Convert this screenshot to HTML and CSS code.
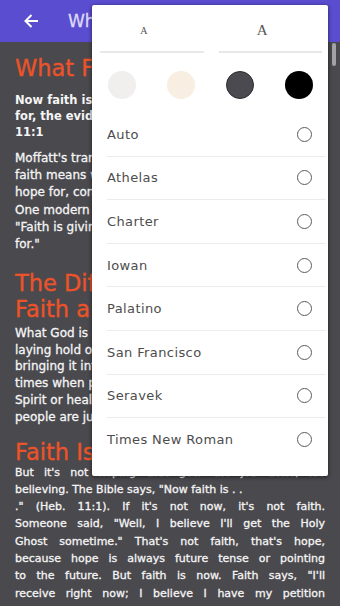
FILE: index.html
```html
<!DOCTYPE html>
<html lang="en">
<head>
<meta charset="utf-8">
<title>What Faith Is</title>
<link rel="stylesheet" href="styles.css">
</head>
<body>
<div class="screen">
  <header class="appbar">
    <svg class="back" width="16" height="16" viewBox="0 0 16 16" aria-hidden="true">
      <path d="M15 8H2.5M8.5 2L2.5 8l6 6" fill="none" stroke="#fff" stroke-width="2"/>
    </svg>
    <span class="title">What Faith Is</span>
  </header>

  <main class="article">
    <h1 class="heading h-first">What Faith Is</h1>
    <p class="verse">Now faith is the substance of things hoped<br>for, the evidence of things not seen. Hebrews<br>11:1</p>
    <p class="text p1">Moffatt's translation of this verse reads, "Now<br>faith means we are confident of what we<br>hope for, convinced of what we do not see."<br>One modern translation of Hebrews 11:1 reads,<br>"Faith is giving substance to things hoped<br>for."</p>
    <h2 class="heading h-second">The Difference Between<br>Faith and Hope</h2>
    <p class="text p2">What God is saying is that faith is<br>laying hold of the unseen and<br>bringing it into the seen. There are<br>times when people want the Holy<br>Spirit or healing, but too many<br>people are just hoping for them.</p>
    <h2 class="heading h-third">Faith Is Now</h2>
    <p class="text justified">
      <span class="line">But it's not hoping that gets the job done, it's</span>
      <span class="line ragged">believing. The Bible says, "Now faith is . .</span>
      <span class="line">." (Heb. 11:1). If it's not now, it's not faith.</span>
      <span class="line">Someone said, "Well, I believe I'll get the Holy</span>
      <span class="line">Ghost sometime." That's not faith, that's hope,</span>
      <span class="line">because hope is always future tense or pointing</span>
      <span class="line">to the future. But faith is now. Faith says, "I'll</span>
      <span class="line">receive right now; I believe I have my petition</span>
    </p>
  </main>

  <div class="scroll-thumb"></div>

  <div class="menu">
    <div class="sizes">
      <div class="size size-small">A</div>
      <div class="size size-large">A</div>
    </div>
    <div class="themes">
      <span class="swatch swatch-light"></span>
      <span class="swatch swatch-sepia"></span>
      <span class="swatch swatch-gray"></span>
      <span class="swatch swatch-black"></span>
    </div>
    <ul class="fonts">
      <li class="font">Auto<span class="radio"></span></li>
      <li class="font">Athelas<span class="radio"></span></li>
      <li class="font">Charter<span class="radio"></span></li>
      <li class="font">Iowan<span class="radio"></span></li>
      <li class="font">Palatino<span class="radio"></span></li>
      <li class="font">San Francisco<span class="radio"></span></li>
      <li class="font">Seravek<span class="radio"></span></li>
      <li class="font">Times New Roman<span class="radio"></span></li>
    </ul>
  </div>
</div>
</body>
</html>
```

FILE: styles.css
```css
html, body {
  margin: 0;
  padding: 0;
  height: 100%;
  overflow: hidden;
}

body {
  background: #4a494e;
  font-family: "DejaVu Sans", sans-serif;
}

.screen {
  position: relative;
  width: 340px;
  height: 606px;
  overflow: hidden;
}

.appbar {
  height: 42px;
  background: #5a4dd0;
  display: flex;
  align-items: center;
  padding-left: 23px;
}

.back {
  display: block;
  flex: none;
}

.title {
  margin-left: 29px;
  color: #dedaf7;
  font-size: 17px;
  white-space: nowrap;
  -webkit-text-stroke: 0.3px #dedaf7;
}

.article {
  padding: 0 15px;
  color: #f5f5f5;
}

.heading {
  margin: 0;
  color: #ec5329;
  font-weight: normal;
  font-size: 22.5px;
  line-height: 26px;
  white-space: nowrap;
  -webkit-text-stroke: 0.35px #ec5329;
}

.h-first { margin-top: 13px; }
.h-second { margin-top: 17px; }
.h-third { margin-top: 13.5px; }

.verse {
  margin: 11px 0 0;
  font-size: 11.5px;
  font-weight: bold;
  line-height: 16px;
  white-space: nowrap;
}

.text {
  margin: 0;
  font-size: 11px;
  -webkit-text-stroke: 0.3px #f5f5f5;
}

.p1 {
  margin-top: 10px;
  font-size: 12px;
  line-height: 17.2px;
  white-space: nowrap;
}

.p2 {
  margin-top: 2.5px;
  font-size: 12px;
  line-height: 16.8px;
  white-space: nowrap;
}

.justified {
  margin-top: -1.5px;
  line-height: 17.3px;
}

.line {
  display: block;
  text-align: justify;
  text-align-last: justify;
}

.line.ragged {
  text-align: left;
  text-align-last: left;
}

.scroll-thumb {
  position: absolute;
  left: 332px;
  top: 43px;
  width: 4px;
  height: 23px;
  border-radius: 2px;
  background: #a3a2a6;
}

/* Reader settings popup */
.menu {
  position: absolute;
  top: 5px;
  left: 92px;
  width: 236px;
  height: 471px;
  background: #fff;
  border-radius: 2px;
  box-shadow: 0 1px 4px rgba(0, 0, 0, 0.6);
}

.sizes {
  display: grid;
  grid-template-columns: 1fr 1fr;
  column-gap: 15px;
  padding: 0 6px 0 8px;
}

.size {
  height: 48px;
  box-sizing: border-box;
  padding: 4px 16px 0 0;
  border-bottom: 2px solid #e8e8e8;
  display: flex;
  align-items: center;
  justify-content: center;
  color: #555;
  font-family: "Liberation Serif", serif;
}

.size-small { font-size: 10px; }
.size-large { font-size: 15px; }

.themes {
  display: grid;
  grid-template-columns: repeat(4, 1fr);
  justify-items: center;
  padding: 18px 0 14px;
}

.swatch {
  display: block;
  width: 28px;
  height: 28px;
  border-radius: 50%;
  box-sizing: border-box;
}

.swatch-light { background: #f1eeee; }
.swatch-sepia { background: #f8eee2; }
.swatch-gray { background: #4b4a50; border: 1px solid #2c2b30; }
.swatch-black { background: #000; }

.fonts {
  list-style: none;
  margin: 0;
  padding: 0 2px 0 15px;
}

.font {
  height: 43.6px;
  box-sizing: border-box;
  border-bottom: 1px solid #ececec;
  display: flex;
  align-items: center;
  justify-content: space-between;
  padding-right: 14.5px;
  font-size: 13px;
  letter-spacing: 0.4px;
  color: #4d4d4d;
}

.font:last-child {
  border-bottom: none;
}

.radio {
  display: block;
  width: 15px;
  height: 15px;
  box-sizing: border-box;
  border: 1.5px solid #5c5c5c;
  border-radius: 50%;
}
```
